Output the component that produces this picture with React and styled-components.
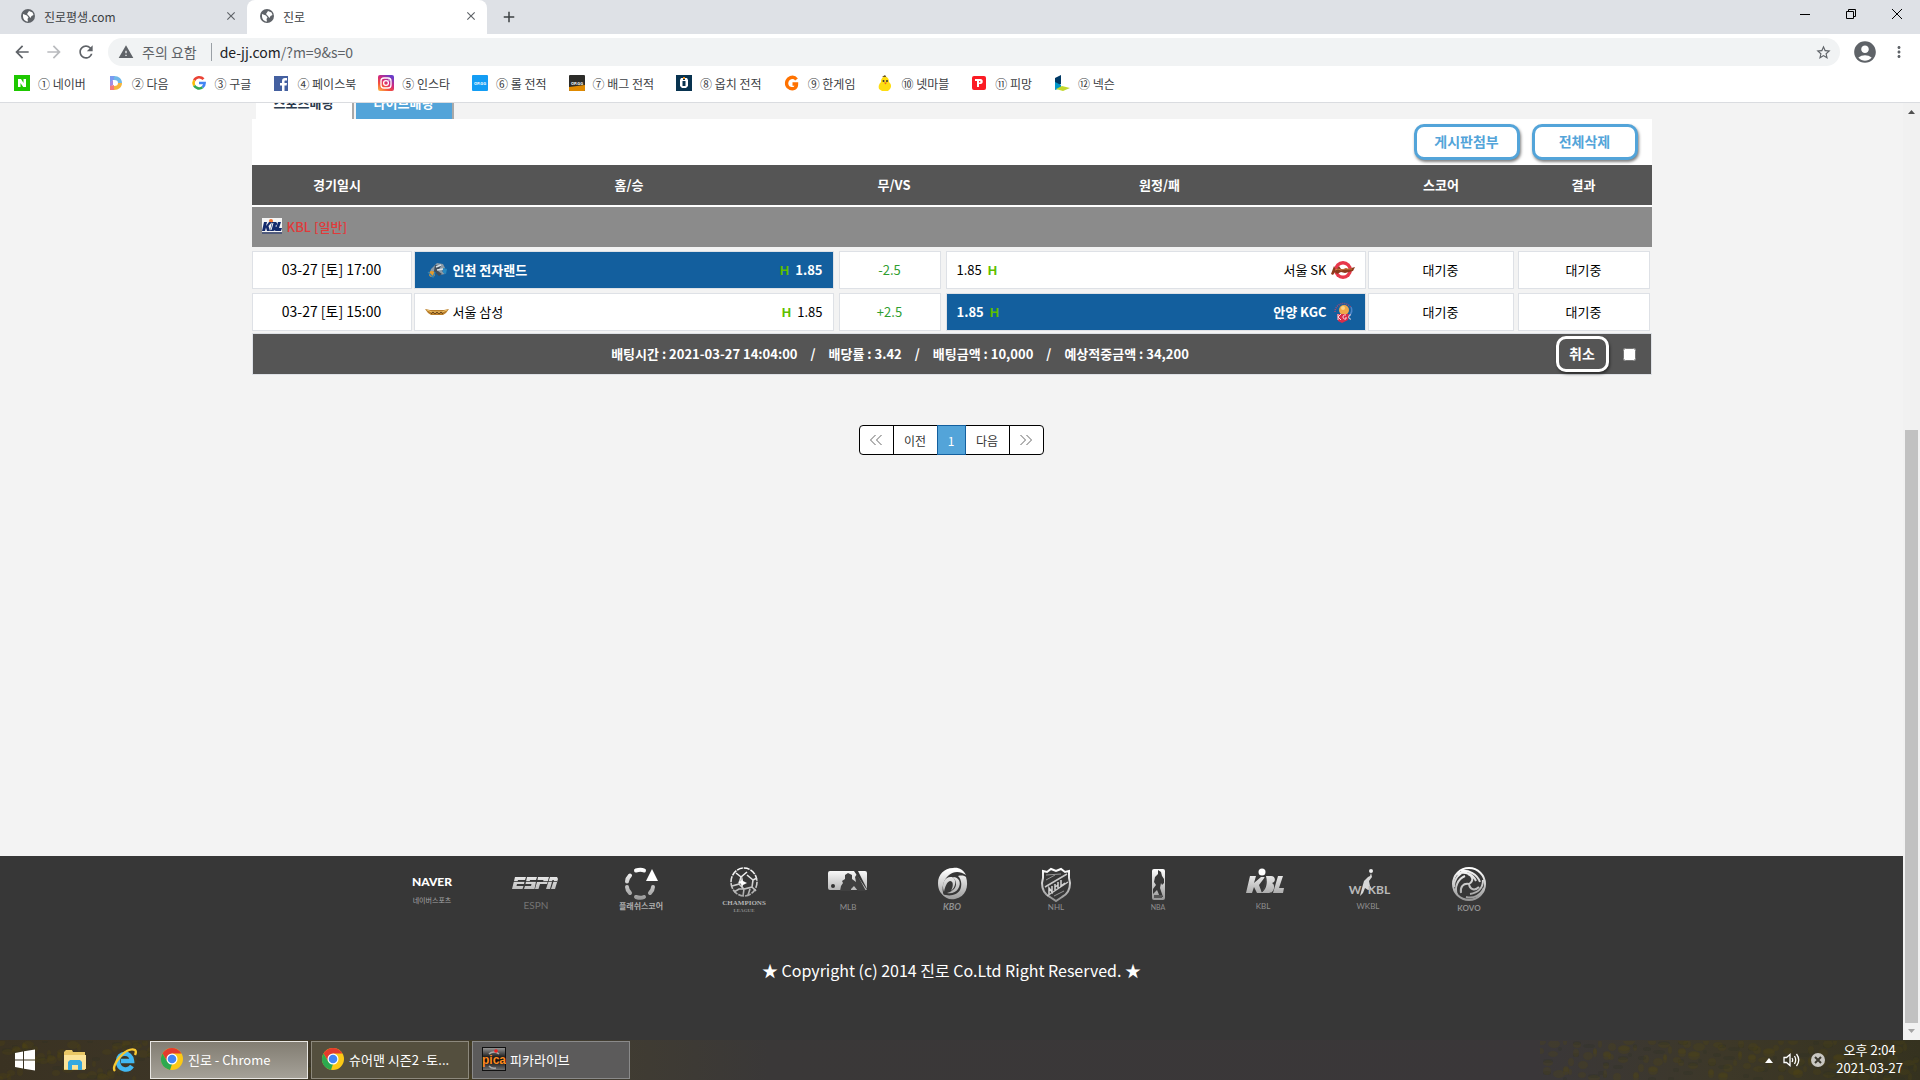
import React from 'react';
import styled, { createGlobalStyle } from 'styled-components';
import {
  MdClose,
  MdAdd,
  MdArrowBack,
  MdArrowForward,
  MdRefresh,
  MdWarning,
  MdStarBorder,
  MdAccountCircle,
  MdMoreVert,
} from 'react-icons/md';

const bookmarks = [
  { id: 'naver', label: '① 네이버' },
  { id: 'daum', label: '② 다음' },
  { id: 'google', label: '③ 구글' },
  { id: 'facebook', label: '④ 페이스북' },
  { id: 'insta', label: '⑤ 인스타' },
  { id: 'lol', label: '⑥ 롤 전적' },
  { id: 'pubg', label: '⑦ 배그 전적' },
  { id: 'overwatch', label: '⑧ 옵치 전적' },
  { id: 'hangame', label: '⑨ 한게임' },
  { id: 'netmarble', label: '⑩ 넷마블' },
  { id: 'pmang', label: '⑪ 피망' },
  { id: 'nexon', label: '⑫ 넥슨' },
];

const games = [
  {
    date: '03-27 [토] 17:00',
    home: '인천 전자랜드',
    homeLogo: 'elephants',
    line: '-2.5',
    away: '서울 SK',
    awayLogo: 'knights',
    pick: 'home',
  },
  {
    date: '03-27 [토] 15:00',
    home: '서울 삼성',
    homeLogo: 'thunders',
    line: '+2.5',
    away: '안양 KGC',
    awayLogo: 'kgc',
    pick: 'away',
  },
];

const partners = [
  'naver',
  'espn',
  'flash',
  'champions',
  'mlb',
  'kbo',
  'nhl',
  'nba',
  'kbl',
  'wkbl',
  'kovo',
];

const Globe = () => (
  <svg width="16" height="16" viewBox="0 0 16 16" aria-hidden="true">
    <circle cx="8" cy="8" r="7" fill="#5f6368" />
    <path d="M3 6l4 1.500 1.500 2-1 1.500.5 2.500C5 13.500 3 11 3 8zM9 3l3.500 1.500L13.500 7l-2 1-1 2-2-2.500L7 6l1-1.500z" fill="#fff" />
  </svg>
);

const BookmarkIcon = ({ id }) => (
  <svg width="16" height="16" viewBox="0 0 16 16" aria-hidden="true">
    {id === 'naver' && (
      <>
        <rect width="16" height="16" fill="#1ec800" />
        <path d="M4 4h3l2.500 4V4H12v8H9.200L6.500 8v4H4z" fill="#fff" />
      </>
    )}
    {id === 'daum' && (
      <>
        <path d="M2 1h5v4H5L2 8z" fill="#7b9bf0" />
        <path d="M2 7l3-2v5L2 12z" fill="#a58be0" />
        <path d="M2 11l4-1v5H2z" fill="#f57a7a" />
        <path d="M6 1c5 0 8 3 8 7h-4c0-2-1-3-4-3z" fill="#6fb7e8" />
        <path d="M14 8c0 4-3 7-8 7v-4c3 0 4-1 4-3z" fill="#f5b53c" />
      </>
    )}
    {id === 'google' && (
      <g fill="none" strokeWidth="2.600">
        <path d="M12.500 4.200A5.600 5.600 0 0 0 3.200 5.300" stroke="#ea4335" />
        <path d="M3.200 5.300a5.600 5.600 0 0 0 0 5.400" stroke="#fbbc05" />
        <path d="M3.200 10.700a5.600 5.600 0 0 0 8.300 1.600" stroke="#34a853" />
        <path d="M11.500 12.300A5.600 5.600 0 0 0 13.600 8H8" stroke="#4285f4" />
      </g>
    )}
    {id === 'facebook' && (
      <>
        <rect x="1" y="1" width="14" height="15" fill="#4460a0" />
        <path d="M9 16v-5.500H7V8h2V6c0-2 1-3 3-3h2v2.400h-1.500c-.8 0-1 .4-1 1V8H14l-.4 2.500h-2.100V16z" fill="#fff" />
      </>
    )}
    {id === 'insta' && (
      <>
        <defs>
          <linearGradient id="insta" x1="0" y1="1" x2="0.700" y2="0">
            <stop offset="0" stopColor="#fec34a" />
            <stop offset="0.350" stopColor="#f5503a" />
            <stop offset="0.650" stopColor="#d0287f" />
            <stop offset="1" stopColor="#6a3cc8" />
          </linearGradient>
        </defs>
        <rect width="16" height="16" rx="2" fill="url(#insta)" />
        <rect x="3" y="3" width="10" height="10" rx="3" fill="none" stroke="#fff" strokeWidth="1.300" />
        <circle cx="8" cy="8" r="2.400" fill="none" stroke="#fff" strokeWidth="1.300" />
        <circle cx="11" cy="5" r="0.700" fill="#fff" />
      </>
    )}
    {(id === 'lol' || id === 'pubg') && (
      <>
        <rect width="16" height="16" rx="1" fill={id === 'lol' ? '#139df4' : '#2c2c29'} />
        {id === 'pubg' && <path d="M0 12l16-2v5a1 1 0 0 1-1 1H1a1 1 0 0 1-1-1z" fill="#e08a00" />}
        <text x="8" y="10" textAnchor="middle" fontSize="4" fontWeight="700" fill="#fff">
          OP.GG
        </text>
      </>
    )}
    {id === 'overwatch' && (
      <>
        <rect width="16" height="16" fill="#083350" />
        <path d="M5 3h2v2h2V3h2l1 2v6l-2 2H6l-2-2V5z" fill="#fff" />
        <path d="M6.500 6h3v5h-3z" fill="#083350" />
        <path d="M7 2h2v2H7z" fill="#f09020" />
      </>
    )}
    {id === 'hangame' && (
      <path
        d="M12.500 4.500C11 2.500 8.500 2 6.500 2.700 3 4 2 7.500 3 10.500c1 3 5 4 7.500 2.800 1.500-.8 2-2.300 2-4.300H8.500"
        fill="none"
        stroke="#ff7200"
        strokeWidth="3.400"
      />
    )}
    {id === 'netmarble' && (
      <>
        <path d="M5 2l3-2 2 3z" fill="#6b5216" />
        <path d="M8 2c3 0 4 2 4 5 2 2 3 4 1 7l-2 2H5l-3-2c-1-3 0-5 2-7 0-3 1-5 4-5z" fill="#fedd12" />
        <circle cx="6.500" cy="6" r="1" fill="#333" />
        <circle cx="10" cy="6" r="1" fill="#333" />
        <path d="M7 7.500h3L8.500 9.500z" fill="#f06020" />
      </>
    )}
    {id === 'pmang' && (
      <>
        <rect x="1" y="1" width="14" height="14" rx="2" fill="#fb1b24" />
        <path d="M4 4h5.500c3 0 3 5 0 5H8v3H6V6H4zM8 6v1.500h1.300V6z" fill="#fff" fillRule="evenodd" />
      </>
    )}
    {id === 'nexon' && (
      <>
        <path d="M1 3l6-3v9l-6 4z" fill="#003a66" />
        <path d="M1 7l6 3v3l-6 2z" fill="#0096c8" />
        <path d="M2 14l6-3 8 2-7 3z" fill="#c3d82d" />
      </>
    )}
  </svg>
);

const TeamLogo = ({ id }) => (
  <svg width="24" height="24" viewBox="0 0 24 24" aria-hidden="true">
    {id === 'elephants' && (
      <>
        <path d="M6 12l6-6 6 1 2 4-3 3 3 3-5 1-5-4-5 1z" fill="#8b9aa6" />
        <path d="M10 8l6 1-3 5 4 3-3 2-5-5z" fill="#3e4d5c" />
        <path d="M11 10l5-2M12 13l6-1" stroke="#d9e3ea" strokeWidth="1.500" />
        <circle cx="7" cy="17" r="3" fill="#e59a2b" />
        <path d="M3 15l5 5 2-5" fill="none" stroke="#2f7fb5" strokeWidth="1.300" />
        <path d="M18 11l4 1-1 5-3-1z" fill="#2788c0" />
      </>
    )}
    {id === 'thunders' && (
      <>
        <path d="M0 10l5 1h14l5-1-3 4-3 2H6l-3-2z" fill="#b87d2a" />
        <path d="M2 11l5 2h10l5-2" fill="none" stroke="#f1c66c" />
        <path d="M6 15l2-2 2 2 2-2 2 2 2-2 2 2" fill="none" stroke="#6d4a1e" />
      </>
    )}
    {id === 'knights' && (
      <>
        <circle cx="12" cy="13" r="9" fill="#e8374b" />
        <circle cx="12" cy="13" r="5.500" fill="#fff" />
        <path d="M0 17l3-8 2 4 3-4 2 3h3l2-1 2 1 7-2-2 4-4 1-4 1-4-1-4 2-2-2-2 3z" fill="#8d3a1c" />
        <path d="M4 13l3-1 3 1 4-1 7 0" fill="none" stroke="#e08a4a" strokeWidth="0.800" />
      </>
    )}
    {id === 'kgc' && (
      <>
        <path d="M4 13A8.500 8.500 0 0 1 20 9" fill="none" stroke="#a84a70" strokeDasharray="1 1" strokeWidth="1.500" />
        <path d="M20 8c2 4 0 7-2 9" fill="none" stroke="#4c86c9" strokeWidth="1.500" />
        <circle cx="13" cy="11" r="5" fill="#f0a848" />
        <circle cx="12" cy="9" r="2" fill="#fbd487" />
        <path d="M6 15h12l-1 6-6 3-4-2z" fill="#d92d48" />
        <path d="M7 15v6M10 15l-3 3 3 3M15 16c-4-1-4 5 0 4v-2M20 16c-3-1-3 5 0 4" fill="none" stroke="#f7dfe3" />
      </>
    )}
  </svg>
);

const LeagueLogo = () => (
  <svg width="20" height="16" viewBox="0 0 20 16" aria-hidden="true">
    <rect width="20" height="14" fill="#f4f4f4" />
    <circle cx="9" cy="3" r="2" fill="#f07030" />
    <path d="M2 4h3L4 8l3-4h3L6.500 8 8 13H5L4 9.500 3 13H0zM10 4h4c2 1 1 4-1 4 3 1 1 5-2 5H8zM16 4h3l-2 6h3l-1 3h-6z" fill="#142a6c" />
    <path d="M11 5l-2 7" stroke="#f4f4f4" />
    <path d="M0 15h20" stroke="#142a6c" />
  </svg>
);

const PartnerLogo = ({ id }) => (
  <svg width="64" height="56" viewBox="0 0 64 56" role="img" aria-label={id}>
    <defs>
      <linearGradient id={`shade-${id}`} gradientUnits="userSpaceOnUse" x1="0" y1="6" x2="0" y2="38">
        <stop offset="0" stopColor="#fff" />
        <stop offset="1" stopColor="#929292" />
      </linearGradient>
    </defs>
    {id === 'naver' && (
      <>
        <LogoText x="32" y="22" $size={12} $weight={900}>NAVER</LogoText>
        <LogoText x="32" y="39" $size={7} $color="#a6a6a6">네이버스포츠</LogoText>
      </>
    )}
    {id === 'espn' && (
      <>
        <g fill={`url(#shade-${id})`}>
          <path d="M11 13h11l-1 3h-7l-.5 1.500h7L20 20h-7l-.5 2h7l-1 3H8zM23 13h10l-1 3h-6l-.3 1.500H32L30.500 25H20l1-3h6l.5-2h-6zM34 13h11l-2 7h-7l-1.500 5H31l2-7h6l.5-2h-6zM46 13h7l1 2-3 10h-4l3-9h-1.500L46 25h-4z" />
        </g>
        <path d="M9 17.500h44" stroke="#373737" strokeWidth="0.800" />
        <LogoText x="32" y="45" $size={10} $color="#747474">ESPN</LogoText>
      </>
    )}
    {id === 'flash' && (
      <g transform="translate(1 -1)">
        <g fill="none" stroke={`url(#shade-${id})`} strokeWidth="4" strokeLinecap="round">
          <path d="M27 7.500c3-1 6-1 8 0M21 12.500c-2 2-3 4-3 6M18 24c0 2 1 4 3 6M27 34c3 1 6 1 8 0M41 30c2-2 3-4 3-6" />
        </g>
        <path d="M43 6l6 12H37z" fill="#fff" />
        <LogoText x="32" y="46" $size={8} $color="#adadad" $weight={700}>플래쉬스코어</LogoText>
      </g>
    )}
    {id === 'champions' && (
      <>
        <g fill="none" stroke={`url(#shade-${id})`} strokeWidth="1.600">
          <ellipse cx="32" cy="18" rx="13" ry="14" strokeDasharray="6 1" />
          <path d="M24 9l5 4-2 7-7 2M29 13l6-5M27 20l5 5 8-2 1-7-6-5M32 25l-1 7M40 23l4 4M41 16l4-2M22 28l5-3 5 0M36 31l2-6" />
        </g>
        <path d="M30 12l1 5 4 2-4 2-1 3-1-4-3-2 3-1z" fill="#fff" />
        <LogoText x="32" y="41" $size={7} $weight={700} $color="#b4b4b4" $serif>CHAMPIONS</LogoText>
        <LogoText x="32" y="48" $size={5} $weight={700} $color="#8d8d8d" $serif>LEAGUE</LogoText>
      </>
    )}
    {id === 'mlb' && (
      <>
        <path d="M14 8h24l13 19H14a2 2 0 0 1-2-2V10a2 2 0 0 1 2-2zM42 8h7a2 2 0 0 1 2 2v16z" transform="translate(0 -1)" fill={`url(#shade-${id})`} />
        <path d="M24 27l1-5 2-3-1-2 3-2v-4l3-2 4 2v4l4 3-1-5 2-3 9 17h-8l-4-5-3 3v2z" fill="#404040" />
        <circle cx="17" cy="22" r="2" fill="#333" />
        <LogoText x="32" y="46" $size={8} $color="#8f8f8f">MLB</LogoText>
      </>
    )}
    {id === 'kbo' && (
      <>
        <g fill={`url(#shade-${id})`}>
          <path d="M46 11C43 5 38 3 33 4c-9 0-15 7-15 15 0 6 2 10 6 13-3-8-1-16 5-21 5-4 11-4 17 0z" />
          <path d="M46 13c3 9 0 20-11 22-6 1-10-1-13-5 8 3 15 1 18-4 2-4 2-10-2-14 4-1 7 0 8 1z" />
          <path d="M24 28c-3-9 1-16 8-15 5 2 4 10-1 14 3-6 2-10-1-10-3 1-5 5-6 11z" />
          <path d="M33 13c6 0 9 6 5 12-2 3-6 5-11 4 7-2 9-6 9-9 0-4-2-5-3-7z" />
        </g>
        <LogoText x="32" y="46" $size={9} $weight={700} $color="#8f8f8f" $italic>KBO</LogoText>
      </>
    )}
    {id === 'nhl' && (
      <g transform="translate(0 -1)">
        <path d="M19 8l4 1 4-3 5 2 5-2 4 3 4-1v7l1 5c0 9-4 12-8 14l-6 4-6-4c-4-2-8-5-8-14l1-5z" fill="none" stroke={`url(#shade-${id})`} strokeWidth="2" />
        <path d="M21 24L43 11M23 33l21-14" stroke="#c9c9c9" strokeWidth="1.500" />
        <path d="M25 31v-6l3 4v-6M31 27v-6M34 25v-6M31 24l3-2M37 17v6l4-3" fill="none" stroke="#d5d5d5" strokeWidth="1.500" />
        <path d="M22 12l15-1M30 33l10-5M22 17l9-5" stroke="#969696" />
        <LogoText x="32" y="47" $size={8} $color="#8f8f8f">NHL</LogoText>
      </g>
    )}
    {id === 'nba' && (
      <g transform="translate(-4 -1)">
        <rect x="28" y="6" width="13" height="31" rx="2" fill={`url(#shade-${id})`} />
        <path d="M34 7l3 2 1 4 2 3v4l-2 2-1-2-1 5 3 9h-3l-3-7-4 4v-5l3-4-2-3 1-5 3-3z" fill="#373737" />
        <path d="M30 32h8v3h-8z" fill="#555" />
        <LogoText x="34" y="47" $size={7} $color="#8f8f8f">NBA</LogoText>
      </g>
    )}
    {id === 'kbl' && (
      <g transform="translate(-2 -1)">
        <circle cx="32" cy="9" r="3.500" fill="#fff" />
        <path d="M20 13h6l-2 7 7-6h4l-6 8 3 8h-5l-3-6-2 6h-6zM36 13h5c5 0 5 6 1 7 4 2 2 10-3 10h-8c5-3 7-9 5-17zM48 13h5l-4 12h5l-1 5H43z" fill={`url(#shade-${id})`} />
        <path d="M35 14c1 6 0 10-3 15" stroke="#444" fill="none" />
        <LogoText x="33" y="46" $size={8} $color="#8f8f8f">KBL</LogoText>
      </g>
    )}
    {id === 'wkbl' && (
      <g transform="translate(-1 0)">
        <circle cx="36" cy="7" r="2" fill="#eee" />
        <path d="M36 9l1 4-3 4 1 5 2 3-4 1-3-2-2 5-3 3 2-8 2-7 4-4 2-1z" fill="#d7d7d7" />
        <LogoText x="20" y="30" $size={12} $weight={700} $color="#b9b9b9">W</LogoText>
        <LogoText x="44" y="30" $size={12} $weight={700} $color="#b9b9b9">KBL</LogoText>
        <LogoText x="33" y="45" $size={8} $color="#8f8f8f">WKBL</LogoText>
      </g>
    )}
    {id === 'kovo' && (
      <g transform="translate(-3 -1)">
        <g fill="none" stroke={`url(#shade-${id})`} strokeWidth="2">
          <circle cx="32" cy="21" r="16" />
          <path d="M20 11c8-3 16 0 19 7M24 8c8-1 16 3 19 11M47 25c-3 7-10 11-18 9M46 17c0 8-5 13-13 14M17 24c0-8 5-14 12-16M20 32c-3-8 1-16 8-19M32 21c-6-1-9 3-8 9M32 21c5-3 4-8-1-10M32 21c1 6 6 7 10 3" />
        </g>
        <LogoText x="32" y="48" $size={8} $weight={700} $color="#8f8f8f">KOVO</LogoText>
      </g>
    )}
  </svg>
);

const ChromeLogo = () => (
  <svg width="24" height="24" viewBox="0 0 24 24" aria-hidden="true">
    <circle cx="12" cy="12" r="11" fill="#fbc916" />
    <path d="M2.500 6.500A11 11 0 0 1 21.500 6.500H12l-4.800 8z" fill="#e33b2e" />
    <path d="M2.500 6.500l5 8.500L12 17l-2 6A11 11 0 0 1 2.500 6.500z" fill="#2da94f" />
    <circle cx="12" cy="12" r="5.500" fill="#fff" />
    <circle cx="12" cy="12" r="4.300" fill="#4285f4" />
  </svg>
);

const PicaLogo = () => (
  <svg width="24" height="24" viewBox="0 0 24 24" aria-hidden="true">
    <defs>
      <linearGradient id="pica" x1="0" y1="0" x2="0" y2="1">
        <stop offset="0" stopColor="#999" />
        <stop offset="0.400" stopColor="#222" />
        <stop offset="0.600" stopColor="#111" />
        <stop offset="1" stopColor="#777" />
      </linearGradient>
    </defs>
    <rect x="0.500" y="0.500" width="23" height="23" fill="url(#pica)" stroke="#111" />
    <path d="M7 7a7 7 0 0 1 10 0M7 19a7 7 0 0 0 7 2" fill="none" stroke="#aaa" strokeWidth="1.500" />
    <circle cx="14" cy="4" r="1.800" fill="#f02020" />
    <text x="12" y="17" textAnchor="middle" fontSize="12" fontWeight="700" fill="#ff8a1c" fontFamily="Liberation Sans, sans-serif">
      pica
    </text>
  </svg>
);

const Blossoms = ({ width, seed }) => {
  const petals = [];
  for (let i = 0; i < width / 2; i += 1) {
    const x = (i * 71 + seed * 13 + (i % 7) * 5) % width;
    const y = (i * 23 + seed * 7 + (i % 5) * 3) % 39;
    petals.push(
      <ellipse
        key={i}
        cx={x}
        cy={y}
        rx={2 + (i % 5)}
        ry={2 + (i % 3)}
        fill={i % 3 ? '#54470f' : '#2c3022'}
        opacity="0.250"
      />,
    );
  }
  return (
    <svg width={width} height="39" aria-hidden="true">
      {petals}
    </svg>
  );
};

const App = () => (
  <Screen>
    <GlobalStyle />
    <TabStrip>
      <BrowserTab>
        <Globe />
        <TabTitle>진로평생.com</TabTitle>
        <IconButton aria-label="탭 닫기">
          <MdClose size={14} />
        </IconButton>
      </BrowserTab>
      <BrowserTab $active>
        <Globe />
        <TabTitle>진로</TabTitle>
        <IconButton aria-label="탭 닫기">
          <MdClose size={14} />
        </IconButton>
      </BrowserTab>
      <NewTab aria-label="새 탭">
        <MdAdd size={18} />
      </NewTab>
      <WindowControls>
        <WindowButton aria-label="최소화">
          <svg width="10" height="10"><path d="M0 5.500h10" stroke="#000" /></svg>
        </WindowButton>
        <WindowButton aria-label="이전 크기로">
          <svg width="10" height="10"><path d="M.5 2.500h7v7h-7zM2.500 2.500v-2h7v7h-2" fill="none" stroke="#000" /></svg>
        </WindowButton>
        <WindowButton aria-label="닫기">
          <svg width="10" height="10"><path d="M0 0l10 10M10 0L0 10" stroke="#000" /></svg>
        </WindowButton>
      </WindowControls>
    </TabStrip>

    <Toolbar>
      <NavButton aria-label="뒤로"><MdArrowBack size={20} /></NavButton>
      <NavButton aria-label="앞으로" $dim><MdArrowForward size={20} /></NavButton>
      <NavButton aria-label="새로고침"><MdRefresh size={20} /></NavButton>
      <Omnibox>
        <MdWarning size={16} color="#5f6368" />
        <Warning>주의 요함</Warning>
        <Address>de-jj.com<span>/?m=9&amp;s=0</span></Address>
        <IconButton aria-label="북마크에 추가"><MdStarBorder size={17} /></IconButton>
      </Omnibox>
      <IconButton aria-label="프로필"><MdAccountCircle size={26} /></IconButton>
      <IconButton aria-label="메뉴"><MdMoreVert size={18} /></IconButton>
    </Toolbar>

    <BookmarkBar>
      {bookmarks.map(({ id, label }) => (
        <Bookmark href={`#${id}`} key={id}>
          <BookmarkIcon id={id} />
          {label}
        </Bookmark>
      ))}
    </BookmarkBar>

    <Viewport>
      <Page>
        <Main>
          <BetTabs>
            <BetTab>스포츠배팅</BetTab>
            <BetTab $live>라이브배팅</BetTab>
          </BetTabs>
          <Actions>
            <ActionButton>게시판첨부</ActionButton>
            <ActionButton>전체삭제</ActionButton>
          </Actions>
          <BetTable>
            <colgroup>
              <Col $width={161} />
              <Col $width={423} />
              <Col $width={107} />
              <Col $width={424} />
              <Col $width={149} />
              <Col $width={136} />
            </colgroup>
            <thead>
              <tr>
                <Head $shift>경기일시</Head>
                <Head $shift>홈/승</Head>
                <Head $shift>무/VS</Head>
                <Head $shift>원정/패</Head>
                <Head>스코어</Head>
                <Head>결과</Head>
              </tr>
            </thead>
            <tbody>
              <tr>
                <LeagueCell colSpan={6}>
                  <League>
                    <LeagueLogo />
                    KBL [일반]
                  </League>
                </LeagueCell>
              </tr>
              {games.map(game => (
                <tr key={game.date}>
                  <Cell $right={1}>
                    <DateBox>{game.date}</DateBox>
                  </Cell>
                  <Cell $left={1} $right={2}>
                    <TeamBox $picked={game.pick === 'home'}>
                      <TeamLogo id={game.homeLogo} />
                      {game.home}
                      <Odds $end>
                        <Handicap>H</Handicap>
                        1.85
                      </Odds>
                    </TeamBox>
                  </Cell>
                  <Cell $left={3} $right={2}>
                    <Box $green>{game.line}</Box>
                  </Cell>
                  <Cell $left={3} $right={1}>
                    <TeamBox $picked={game.pick === 'away'}>
                      <Odds>
                        1.85
                        <Handicap>H</Handicap>
                      </Odds>
                      {game.away}
                      <TeamLogo id={game.awayLogo} />
                    </TeamBox>
                  </Cell>
                  <Cell $left={1} $right={2}>
                    <Box>대기중</Box>
                  </Cell>
                  <Cell $left={2} $right={2}>
                    <Box>대기중</Box>
                  </Cell>
                </tr>
              ))}
              <tr>
                <SummaryCell colSpan={6}>
                  <Summary>
                    <SummaryText>
                      <span>배팅시간 : 2021-03-27 14:04:00</span>
                      <span>/</span>
                      <span>배당률 : 3.42</span>
                      <span>/</span>
                      <span>배팅금액 : 10,000</span>
                      <span>/</span>
                      <span>예상적중금액 : 34,200</span>
                    </SummaryText>
                    <CancelButton>취소</CancelButton>
                    <Check type="checkbox" aria-label="배팅 선택" />
                  </Summary>
                </SummaryCell>
              </tr>
            </tbody>
          </BetTable>

          <Pagination aria-label="페이지">
            <PageButton $thin aria-label="처음">
              <svg width="12" height="12"><path d="M5.500 1L.5 6l5 5M11.500 1l-5 5 5 5" /></svg>
            </PageButton>
            <PageButton>이전</PageButton>
            <PageButton $current>1</PageButton>
            <PageButton>다음</PageButton>
            <PageButton $thin aria-label="마지막">
              <svg width="12" height="12"><path d="M.5 1l5 5-5 5M6.500 1l5 5-5 5" /></svg>
            </PageButton>
          </Pagination>
        </Main>

        <Footer>
          <Partners>
            {partners.map(id => (
              <PartnerLogo id={id} key={id} />
            ))}
          </Partners>
          <Copyright>★ Copyright (c) 2014 진로 Co.Ltd Right Reserved. ★</Copyright>
        </Footer>
      </Page>
      <Scrollbar>
        <svg width="17" height="17"><path d="M5 11h7L8.500 7z" fill="#505050" /></svg>
        <Thumb />
        <svg width="17" height="17"><path d="M5 6h7l-3.500 4z" fill="#a3a3a3" /></svg>
      </Scrollbar>
    </Viewport>

    <Taskbar>
      <Wallpaper>
        <Blossoms width={480} seed={3} />
        <Blossoms width={380} seed={5} />
      </Wallpaper>
      <Launcher aria-label="시작">
        <svg width="20" height="22" viewBox="0 0 20 22">
          <path d="M0 4l8-1.500V10.500H0zM9 2.300L20 .5v10H9zM0 11.500h8v8L0 18zM9 11.500h11v10L9 19.700z" fill="#fff" />
        </svg>
      </Launcher>
      <Launcher aria-label="파일 탐색기">
        <svg width="24" height="22" viewBox="0 0 24 22">
          <path d="M1 3l2-2h6l1 2h12v18H1z" fill="#e9c766" />
          <path d="M1 6h22v14H1z" fill="#fbe399" />
          <path d="M5 21v-8l2-2h10l2 2v8h-4v-5H9v5z" fill="#35a8e0" />
        </svg>
      </Launcher>
      <Launcher aria-label="인터넷 익스플로러">
        <svg width="26" height="26" viewBox="0 0 26 26">
          <path d="M20 19c-4 6-14 4-14-5C6 5 19 4 20 14H9" fill="none" stroke="#42b8f2" strokeWidth="4.500" />
          <path d="M3 24C-2 19 14-1 23 3c1 1 1 3 0 5" fill="none" stroke="#f7c832" strokeWidth="2.400" />
        </svg>
      </Launcher>
      <Tasks>
        <Task $tone="active">
          <ChromeLogo />
          진로 - Chrome
        </Task>
        <Task>
          <ChromeLogo />
          슈어맨 시즌2 -토...
        </Task>
        <Task $tone="solid">
          <PicaLogo />
          피카라이브
        </Task>
      </Tasks>
      <Tray>
        <svg width="8" height="5"><path d="M0 5h8L4 0z" fill="#fff" /></svg>
        <svg width="17" height="16" viewBox="0 0 17 16" fill="none" stroke="#fff" strokeWidth="1.300">
          <path d="M1 5.500h2.500L7 2.500v11l-3.500-3H1zM9 6c1 1.500 1 2.500 0 4M11.500 4c1.800 3 1.800 5 0 8M13.500 2c3 4 3 8 0 12" />
        </svg>
        <svg width="16" height="16" viewBox="0 0 16 16">
          <circle cx="8" cy="8" r="7" fill="#c9c7c2" />
          <path d="M5 5l6 6M11 5l-6 6" stroke="#3c3a30" strokeWidth="2" />
        </svg>
        <Clock>
          <span>오후 2:04</span>
          <span>2021-03-27</span>
        </Clock>
      </Tray>
    </Taskbar>
  </Screen>
);

export default App;

const GlobalStyle = createGlobalStyle`
  * {
    box-sizing: border-box;
  }

  body {
    margin: 0;
    font-family: 'Noto Sans CJK KR', sans-serif;
    font-size: 12px;
  }

  button {
    border: 0;
    padding: 0;
    background: none;
    color: inherit;
    font: inherit;
  }

  svg {
    flex: none;
  }
`;

const Screen = styled.div`
  display: flex;
  flex-direction: column;
  height: 100vh;
  overflow: hidden;
`;

const TabStrip = styled.div`
  display: flex;
  height: 34px;
  background: #dee1e6;
  color: #3c4043;
`;

const BrowserTab = styled.div`
  display: flex;
  align-items: center;
  gap: 8px;
  width: ${({ $active }) => ($active ? 240 : 247)}px;
  padding: 0 9px 2px ${({ $active }) => ($active ? 12 : 20)}px;
  border-radius: 8px 8px 0 0;
  background: ${({ $active }) => ($active ? '#fff' : 'transparent')};
`;

const TabTitle = styled.span`
  flex: 1;
`;

const IconButton = styled.button`
  display: flex;
  align-items: center;
  color: #5f6368;
`;

const NewTab = styled(IconButton)`
  margin-left: 13px;
  color: #3c4043;
`;

const WindowControls = styled.div`
  display: flex;
  align-items: flex-start;
  margin-left: auto;
`;

const WindowButton = styled.button`
  display: flex;
  align-items: center;
  justify-content: center;
  width: 46px;
  height: 28px;
`;

const Toolbar = styled.div`
  display: flex;
  align-items: center;
  gap: 12px;
  height: 36px;
  padding: 0 12px;
  background: #fff;
`;

const NavButton = styled(IconButton)`
  color: ${({ $dim }) => ($dim ? '#b9bbbe' : '#5f6368')};
`;

const Omnibox = styled.div`
  display: flex;
  flex: 1;
  align-items: center;
  gap: 8px;
  height: 28px;
  padding: 0 8px 0 10px;
  border-radius: 14px;
  background: #f1f3f4;
  font-size: 14px;
`;

const Warning = styled.span`
  padding-right: 14px;
  border-right: 1px solid #9aa0a6;
  color: #5f6368;
  line-height: 18px;
`;

const Address = styled.div`
  flex: 1;
  color: #202124;

  span {
    color: #5f6368;
  }
`;

const BookmarkBar = styled.nav`
  display: flex;
  align-items: center;
  gap: 22px;
  height: 33px;
  padding: 0 14px 6px;
  border-bottom: 1px solid #dadce0;
  background: #fff;
  white-space: nowrap;
`;

const Bookmark = styled.a`
  display: flex;
  align-items: center;
  gap: 8px;
  color: #3c4043;
  text-decoration: none;
`;

const Viewport = styled.div`
  display: flex;
  flex: 1;
  min-height: 0;
  overflow: hidden;
  background: #f3f3f3;
`;

const Page = styled.div`
  display: flex;
  flex: 1;
  flex-direction: column;
`;

const Main = styled.main`
  flex: 1;
  width: 100%;
  max-width: 1400px;
  margin: 0 auto;
`;

// scrolled so that only the lower part of the tabs is left
const BetTabs = styled.div`
  display: flex;
  gap: 2px;
  margin-top: -14px;
  padding-left: 4px;
`;

const BetTab = styled.button`
  width: 98px;
  height: 30px;
  padding-bottom: 3px;
  border-right: 2px solid #a9a9a9;
  background: ${({ $live }) => ($live ? '#53a4d9' : '#fff')};
  color: ${({ $live }) => ($live ? '#fff' : '#2b3a4d')};
  font-size: 13px;
  font-weight: 700;
`;

const Actions = styled.div`
  display: flex;
  justify-content: flex-end;
  gap: 12px;
  height: 46px;
  padding: 5px 14px;
  background: #fff;
`;

const ActionButton = styled.button`
  width: 106px;
  height: 36px;
  padding-bottom: 2px;
  border: 3px solid #53a4d9;
  border-radius: 10px;
  background: #fff;
  box-shadow: 1px 2px 3px rgba(0, 0, 0, 0.5);
  color: #53a4d9;
  font-size: 14px;
  font-weight: 700;
`;

const BetTable = styled.table`
  width: 100%;
  table-layout: fixed;
  border-collapse: collapse;
  font-size: 13px;
`;

const Col = styled.col`
  width: ${({ $width }) => $width}px;
`;

const Head = styled.th`
  height: 40px;
  padding: 0 0 2px ${({ $shift }) => ($shift ? 10 : 0)}px;
  background: #555;
  color: #fff;
`;

const LeagueCell = styled.td`
  padding: 2px 0 0;
  background: #fff;
`;

const League = styled.div`
  display: flex;
  align-items: center;
  gap: 5px;
  height: 40px;
  padding: 0 10px 2px;
  background: #8b8b8b;
  color: #e03a3a;
  font-weight: 500;
`;

const Cell = styled.td`
  padding: 4px ${({ $right }) => $right || 0}px 0 ${({ $left }) => $left || 0}px;
`;

const Box = styled.div`
  display: flex;
  align-items: center;
  justify-content: center;
  height: 38px;
  padding-bottom: 2px;
  border: 1px solid #dee1e6;
  background: #fff;
  color: ${({ $green }) => ($green ? '#2f9e2f' : '#000')};
`;

const DateBox = styled(Box)`
  font-size: 14px;
`;

const TeamBox = styled(Box)`
  justify-content: flex-start;
  gap: 4px;
  padding: 0 10px 2px;
  background: ${({ $picked }) => ($picked ? '#135f9e' : '#fff')};
  color: ${({ $picked }) => ($picked ? '#fff' : '#000')};
  font-weight: ${({ $picked }) => ($picked ? 700 : 400)};
`;

const Odds = styled.span`
  display: flex;
  align-items: baseline;
  gap: 6px;
  margin: ${({ $end }) => ($end ? '0 0 0 auto' : '0 auto 0 0')};
`;

const Handicap = styled.b`
  color: #5fbf00;
  font-family: 'Liberation Sans', sans-serif;
  font-size: 13px;
`;

const SummaryCell = styled.td`
  padding: 2px 0 0;
`;

const Summary = styled.div`
  display: flex;
  align-items: center;
  height: 42px;
  padding-right: 15px;
  border: 1px solid #dee1e6;
  background: #555;
  color: #fff;
  font-weight: 700;
`;

const SummaryText = styled.div`
  display: flex;
  flex: 1;
  justify-content: center;
  gap: 13px;
  padding-bottom: 2px;
`;

const CancelButton = styled.button`
  width: 53px;
  height: 36px;
  margin: 0 14px 0 8px;
  padding-bottom: 2px;
  border: 3px solid #fff;
  border-radius: 10px;
  box-shadow: 1px 2px 3px rgba(0, 0, 0, 0.5);
  font-size: 14px;
`;

const Check = styled.input`
  width: 13px;
  height: 13px;
  margin: 0;
`;

const Pagination = styled.nav`
  display: flex;
  justify-content: center;
  margin-top: 50px;
`;

const PageButton = styled.button`
  display: flex;
  align-items: center;
  justify-content: center;
  width: ${({ $thin, $current }) => ($current ? 29 : $thin ? 35 : 45)}px;
  height: 30px;
  margin-left: -1px;
  border: 1px solid ${({ $current }) => ($current ? '#135f9e' : '#000')};
  background: ${({ $current }) => ($current ? '#53a4d9' : '#fff')};
  color: ${({ $current }) => ($current ? '#fff' : '#333')};
  z-index: ${({ $current }) => ($current ? 1 : 0)};

  &:first-child {
    border-radius: 4px 0 0 4px;
  }

  &:last-child {
    border-radius: 0 4px 4px 0;
  }

  path {
    fill: none;
    stroke: #666;
  }
`;

const Footer = styled.footer`
  display: flex;
  flex-direction: column;
  align-items: center;
  height: 184px;
  padding-top: 8px;
  background: #373737;
  color: #fff;
`;

const Partners = styled.div`
  display: grid;
  grid-template-columns: repeat(11, 104px);
  justify-items: center;
`;

const LogoText = styled.text`
  fill: ${({ $color }) => $color || '#fff'};
  font-family: ${({ $serif }) => ($serif ? "'Liberation Serif', serif" : "Lato, 'Noto Sans CJK KR', sans-serif")};
  font-size: ${({ $size }) => $size}px;
  font-style: ${({ $italic }) => ($italic ? 'italic' : 'normal')};
  font-weight: ${({ $weight }) => $weight || 400};
  text-anchor: middle;
`;

const Copyright = styled.p`
  margin: 38px 0 0;
  font-size: 16px;
  line-height: 24px;
`;

const Scrollbar = styled.div`
  display: flex;
  flex-direction: column;
  width: 17px;
  background: #f1f1f1;
`;

const Thumb = styled.div`
  flex: 1;
  margin: 310px 2px 0;
  background: #c1c1c1;
`;

const Taskbar = styled.div`
  position: relative;
  display: flex;
  align-items: center;
  height: 40px;
  background: linear-gradient(90deg, #3a3222, #423d30 30%, #3a3838 40%, #3a3739 80%, #3d3828 90%, #35321f);
  color: #fff;
  font-size: 13px;
`;

const Wallpaper = styled.div`
  position: absolute;
  inset: 1px 0 0;
  display: flex;
  justify-content: space-between;
  overflow: hidden;
`;

const Launcher = styled.button`
  position: relative;
  display: flex;
  justify-content: center;
  width: 50px;
`;

const Tasks = styled.div`
  position: relative;
  display: flex;
  gap: 3px;
`;

const taskTones = {
  active: { border: '#e8e6e2', background: 'linear-gradient(#827d72, #a5a198)' },
  solid: { border: '#8a8a8a', background: '#5c5b5b' },
  plain: { border: '#8d897d', background: '#544f3e' },
};

const Task = styled.button`
  display: flex;
  align-items: center;
  gap: 4px;
  width: 158px;
  height: 38px;
  padding: 0 0 2px 9px;
  border: 1px solid ${({ $tone = 'plain' }) => taskTones[$tone].border};
  background: ${({ $tone = 'plain' }) => taskTones[$tone].background};
  white-space: nowrap;
`;

const Tray = styled.div`
  position: relative;
  display: flex;
  align-items: center;
  gap: 10px;
  margin-left: auto;
  padding-right: 17px;
`;

const Clock = styled.div`
  display: flex;
  flex-direction: column;
  align-items: center;
  padding-bottom: 2px;
  line-height: 18px;
`;
